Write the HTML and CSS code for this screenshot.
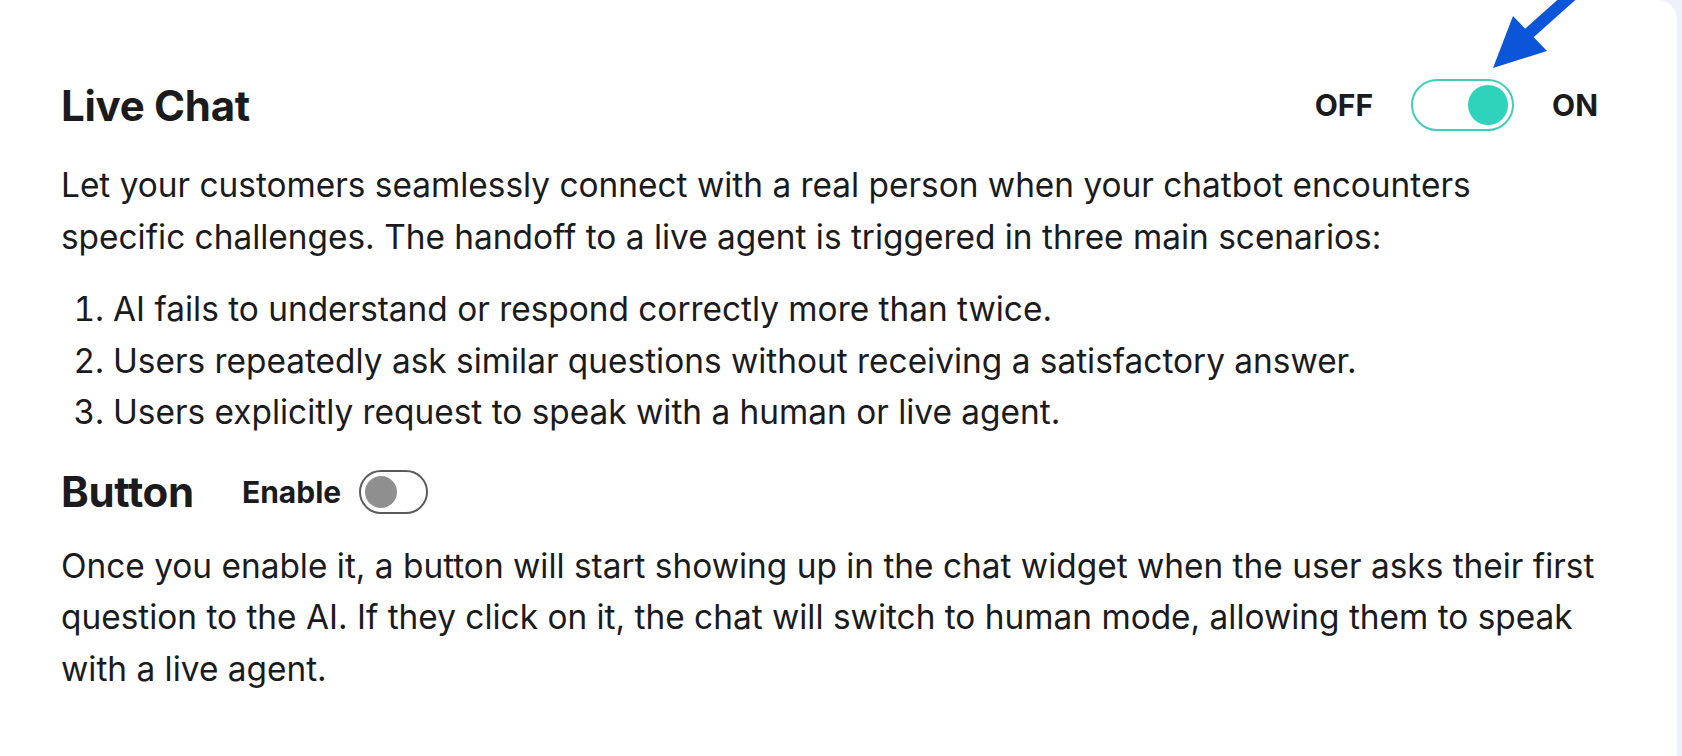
FILE: index.html
```html
<!DOCTYPE html>
<html lang="en">

<head>
    <meta charset="UTF-8">
    <meta name="viewport" content="width=device-width, initial-scale=1.0">
    <title>Live Chat Settings</title>
    <link rel="stylesheet" href="styles.css">
</head>

<body>
    <div class="card">
        <div class="section-head">
            <h2>Live Chat</h2>
            <div class="switch-group">
                <span class="switch-label">OFF</span>
                <label class="switch switch-on">
                    <input type="checkbox" checked>
                    <span class="knob"></span>
                </label>
                <span class="switch-label">ON</span>
            </div>
        </div>

        <p class="intro">Let your customers seamlessly connect with a real person when your chatbot encounters specific challenges. The handoff to a live agent is triggered in three main scenarios:</p>

        <ol>
            <li>AI fails to understand or respond correctly more than twice.</li>
            <li>Users repeatedly ask similar questions without receiving a satisfactory answer.</li>
            <li>Users explicitly request to speak with a human or live agent.</li>
        </ol>

        <div class="sub-head">
            <h2>Button</h2>
            <span class="switch-label">Enable</span>
            <label class="switch switch-small">
                <input type="checkbox">
                <span class="knob"></span>
            </label>
        </div>

        <p>Once you enable it, a button will start showing up in the chat widget when the user asks their first question to the AI. If they click on it, the chat will switch to human mode, allowing them to speak with a live agent.</p>

        <!-- pointer to the main switch -->
        <svg class="pointer" width="120" height="80" viewBox="0 0 120 80">
            <line x1="33" y1="38" x2="80" y2="-4" stroke="#0b55d8" stroke-width="12" />
            <polygon points="0,70 20,18 54,53" fill="#0b55d8" />
        </svg>
    </div>
</body>

</html>
```

FILE: styles.css
```css
body {
    font-family: Inter, "Noto Sans", sans-serif;
    margin: 0;
    padding: 0;
    background-color: #eef1fa;
    color: #1b1b1d;
}

.card {
    position: relative;
    width: 1677px;
    min-height: 756px;
    box-sizing: border-box;
    background: #fff;
    border-radius: 0 20px 0 0;
    padding: 79px 79px 0 61px;
}

h2 {
    margin: 0;
    font-size: 42px;
    font-weight: 700;
    letter-spacing: -0.3px;
}

.section-head {
    display: flex;
    align-items: center;
    justify-content: space-between;
    height: 52px;
}

.switch-group {
    display: flex;
    align-items: center;
    gap: 38px;
}

.switch-label {
    font-size: 30px;
    font-weight: 700;
}

/* Toggle switch */
.switch {
    position: relative;
    display: inline-block;
    box-sizing: border-box;
    border-radius: 999px;
    background: #fff;
    cursor: pointer;
}

.switch input {
    display: none;
}

.switch .knob {
    position: absolute;
    top: 50%;
    transform: translateY(-50%);
    border-radius: 50%;
}

.switch-on {
    width: 103px;
    height: 52px;
    border: 2px solid #45cbb6;
}

.switch-on .knob {
    right: 4px;
    width: 40px;
    height: 40px;
    background: #2fd3bb;
}

.switch-small {
    width: 69px;
    height: 44px;
    border: 2px solid #5a5a5a;
}

.switch-small .knob {
    left: 4px;
    width: 32px;
    height: 32px;
    background: #8f8f8f;
}

p {
    margin: 29px 0 0;
    font-size: 33.4px;
    line-height: 51.5px;
}

.intro {
    max-width: 1480px;
}

ol {
    margin: 21px 0 0;
    padding-left: 52px;
    font-size: 33.4px;
    line-height: 51.5px;
}

.sub-head {
    display: flex;
    align-items: center;
    height: 44px;
    margin-top: 31px;
}

.sub-head h2 {
    margin-right: 48px;
}

.sub-head .switch-label {
    margin-right: 18px;
}

.sub-head + p {
    margin-top: 27px;
}

.pointer {
    position: absolute;
    left: 1493px;
    top: -2px;
}
```
